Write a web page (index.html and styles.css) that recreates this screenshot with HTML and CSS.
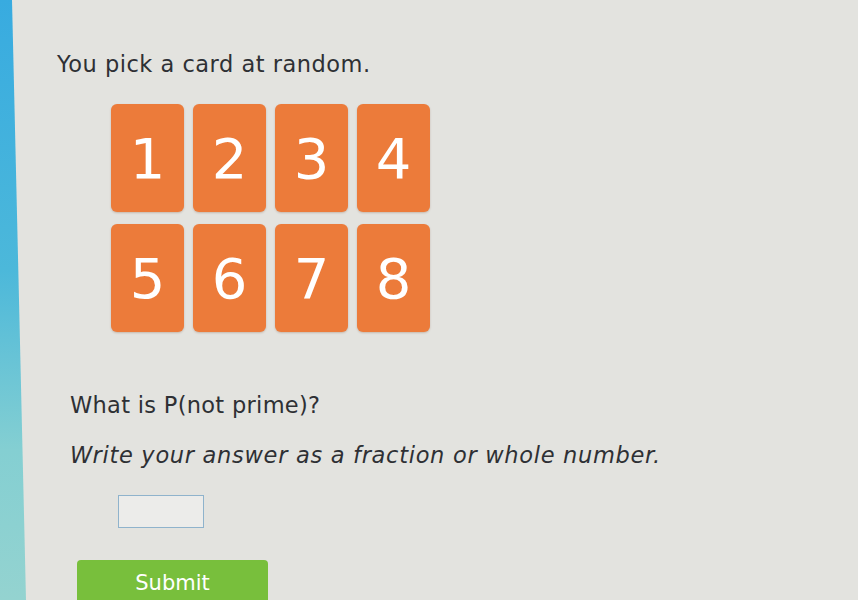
FILE: index.html
```html
<!DOCTYPE html>
<html>
<head>
<meta charset="utf-8">
<link rel="stylesheet" href="styles.css">
</head>
<body>
<div class="page">
  <div class="sidebar"></div>
  <main class="content">
    <p class="prompt">You pick a card at random.</p>
    <div class="cards">
      <div class="card">1</div>
      <div class="card">2</div>
      <div class="card">3</div>
      <div class="card">4</div>
      <div class="card">5</div>
      <div class="card">6</div>
      <div class="card">7</div>
      <div class="card">8</div>
    </div>
    <p class="question">What is P(not prime)?</p>
    <p class="instruction">Write your answer as a fraction or whole number.</p>
    <div class="answer"><input class="answer-box" type="text" aria-label="answer"></div>
    <button class="submit" type="button">Submit</button>
  </main>
</div>
</body>
</html>
```
FILE: styles.css
```css
html, body {
  margin: 0;
  padding: 0;
  height: 100%;
  overflow: hidden;
}
body {
  background: #e3e3df;
  font-family: "DejaVu Sans", Verdana, sans-serif;
  color: #2e3034;
}
.page {
  display: flex;
  height: 600px;
}
.sidebar {
  width: 26px;
  flex: none;
  background: linear-gradient(180deg, #38abe0 0%, #4cb8da 45%, #84cfd2 75%, #94d3d0 100%);
  clip-path: polygon(0 0, 12px 0, 26px 100%, 0 100%);
}
.content {
  flex: 1;
  padding-left: 31px;
}
.prompt {
  margin: 50px 0 0 0;
  font-size: 22.5px;
  line-height: 28px;
  letter-spacing: 0.5px;
}
.cards {
  display: grid;
  grid-template-columns: repeat(4, 73px);
  grid-auto-rows: 108px;
  column-gap: 9px;
  row-gap: 12px;
  margin: 26px 0 0 54px;
}
.card {
  background: #ec7b3a;
  border-radius: 6px;
  color: #ffffff;
  font-size: 56px;
  display: flex;
  align-items: center;
  justify-content: center;
  box-shadow: 0 1px 2px rgba(120, 60, 20, 0.25);
}
.question {
  margin: 59px 0 0 13px;
  font-size: 22.5px;
  line-height: 28px;
  letter-spacing: 0.3px;
}
.instruction {
  margin: 22px 0 0 13px;
  font-size: 22.5px;
  line-height: 28px;
  font-style: italic;
  letter-spacing: 0.7px;
}
.answer {
  margin: 26px 0 0 61px;
}
.answer-box {
  display: block;
  box-sizing: border-box;
  width: 86px;
  height: 33px;
  margin: 0;
  border: 1.5px solid #8fb3cc;
  background: #ececea;
  outline: none;
}
.submit {
  display: block;
  margin: 32px 0 0 20px;
  width: 191px;
  height: 50px;
  border: none;
  border-radius: 4px;
  background: #78bf3c;
  color: #ffffff;
  font-family: "DejaVu Sans", Verdana, sans-serif;
  font-size: 21px;
  padding: 0 0 4px 0;
}
```
